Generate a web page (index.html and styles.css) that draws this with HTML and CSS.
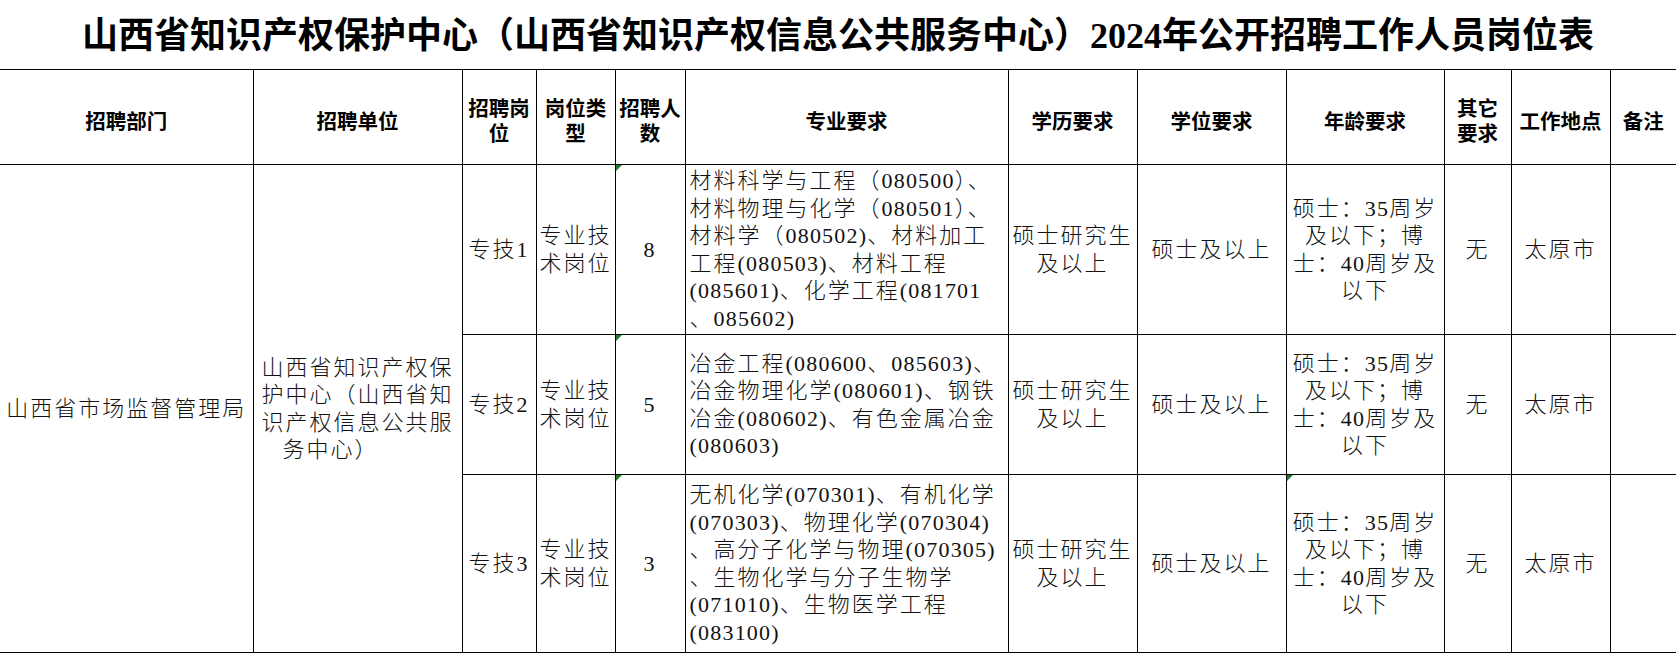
FILE: index.html
```html
<!DOCTYPE html>
<html lang="zh-CN">
<head>
<meta charset="utf-8">
<title>岗位表</title>
<link rel="stylesheet" href="styles.css">
</head>
<body>
<div class="title">山西省知识产权保护中心（山西省知识产权信息公共服务中心）2024年公开招聘工作人员岗位表</div>
<table class="grid">
  <colgroup>
    <col class="c-dept"><col class="c-unit"><col class="c-post"><col class="c-type"><col class="c-num"><col class="c-major"><col class="c-edu"><col class="c-deg"><col class="c-age"><col class="c-other"><col class="c-place"><col class="c-note">
  </colgroup>
  <thead>
    <tr class="head">
      <th class="edge-l">招聘部门</th>
      <th>招聘单位</th>
      <th><span class="hl">招聘岗</span><span class="hl">位</span></th>
      <th><span class="hl">岗位类</span><span class="hl">型</span></th>
      <th><span class="hl">招聘人</span><span class="hl">数</span></th>
      <th>专业要求</th>
      <th>学历要求</th>
      <th>学位要求</th>
      <th>年龄要求</th>
      <th><span class="hl">其它</span><span class="hl">要求</span></th>
      <th>工作地点</th>
      <th class="edge-r">备注</th>
    </tr>
  </thead>
  <tbody>
    <tr class="r1">
      <td rowspan="3" class="edge-l">山西省市场监督管理局</td>
      <td rowspan="3">山西省知识产权保<br>护中心（山西省知<br>识产权信息公共服<br><span class="tail">务中心）</span></td>
      <td>专技1</td>
      <td>专业技<br>术岗位</td>
      <td class="flag">8</td>
      <td class="major">材料科学与工程（<span class="code">080500</span>）、<br>材料物理与化学（<span class="code">080501</span>）、<br>材料学（<span class="code">080502)</span>、材料加工<br>工程<span class="code">(080503)</span>、材料工程<br><span class="code">(085601)</span>、化学工程<span class="code">(081701</span><br>、<span class="code">085602)</span></td>
      <td>硕士研究生<br>及以上</td>
      <td>硕士及以上</td>
      <td>硕士：<span class="code">35</span>周岁<br>及以下；博<br>士：<span class="code">40</span>周岁及<br>以下</td>
      <td>无</td>
      <td>太原市</td>
      <td class="edge-r"></td>
    </tr>
    <tr class="r2">
      <td>专技2</td>
      <td>专业技<br>术岗位</td>
      <td class="flag">5</td>
      <td class="major">冶金工程<span class="code">(080600</span>、<span class="code">085603)</span>、<br>冶金物理化学<span class="code">(080601)</span>、钢铁<br>冶金<span class="code">(080602)</span>、有色金属冶金<br><span class="code">(080603)</span></td>
      <td>硕士研究生<br>及以上</td>
      <td>硕士及以上</td>
      <td>硕士：<span class="code">35</span>周岁<br>及以下；博<br>士：<span class="code">40</span>周岁及<br>以下</td>
      <td>无</td>
      <td>太原市</td>
      <td class="edge-r"></td>
    </tr>
    <tr class="r3">
      <td>专技3</td>
      <td>专业技<br>术岗位</td>
      <td class="flag">3</td>
      <td class="major">无机化学<span class="code">(070301)</span>、有机化学<br><span class="code">(070303)</span>、物理化学<span class="code">(070304)</span><br>、高分子化学与物理<span class="code">(070305)</span><br>、生物化学与分子生物学<br><span class="code">(071010)</span>、生物医学工程<br><span class="code">(083100)</span></td>
      <td>硕士研究生<br>及以上</td>
      <td>硕士及以上</td>
      <td class="flag">硕士：<span class="code">35</span>周岁<br>及以下；博<br>士：<span class="code">40</span>周岁及<br>以下</td>
      <td>无</td>
      <td>太原市</td>
      <td class="edge-r"></td>
    </tr>
  </tbody>
</table>
</body>
</html>
```

FILE: styles.css
```css
html, body {
  margin: 0;
  padding: 0;
  background: #fff;
  color: #000;
}

.title {
  height: 69px;
  box-sizing: border-box;
  padding-top: 12px;
  text-align: center;
  white-space: nowrap;
  font-family: "Liberation Serif", "Noto Sans CJK SC", serif;
  font-weight: 700;
  font-size: 36px;
  line-height: 48px;
}

.grid {
  width: 1676px;
  table-layout: fixed;
  border-collapse: collapse;
}

.c-dept { width: 253px; }
.c-unit { width: 209px; }
.c-post { width: 74px; }
.c-type { width: 79px; }
.c-num { width: 70px; }
.c-major { width: 323px; }
.c-edu { width: 129px; }
.c-deg { width: 149px; }
.c-age { width: 158px; }
.c-other { width: 67px; }
.c-place { width: 99px; }
.c-note { width: 66px; }

.grid th,
.grid td {
  border: 1px solid #000;
  padding: 0 2px;
  text-align: center;
  vertical-align: middle;
  white-space: nowrap;
  overflow: hidden;
}

.grid th {
  padding-top: 6px;
  font-family: "Noto Sans CJK SC", sans-serif;
  font-weight: 700;
  font-size: 20.5px;
  line-height: 25px;
}

.grid th .hl {
  display: block;
  height: 25px;
  line-height: 25px;
}

.grid td {
  font-family: "Liberation Serif", "Noto Sans CJK SC", serif;
  font-weight: 300;
  font-size: 22px;
  line-height: 27.5px;
  letter-spacing: 2px;
  color: #111;
}

.grid .edge-l { border-left: 0; }
.grid .edge-r { border-right: 0; }

.head { height: 95px; }
.r1 { height: 170px; }
.r2 { height: 140px; }
.r3 { height: 178px; }

.grid td.major {
  text-align: left;
  padding-left: 4px;
}

.code { letter-spacing: 1.2px; }

.tail { padding-right: 54px; }

.flag { position: relative; }
.flag::before {
  content: "";
  position: absolute;
  top: 0;
  left: 0;
  border-top: 6px solid #1f7a2a;
  border-right: 6px solid transparent;
}
```
